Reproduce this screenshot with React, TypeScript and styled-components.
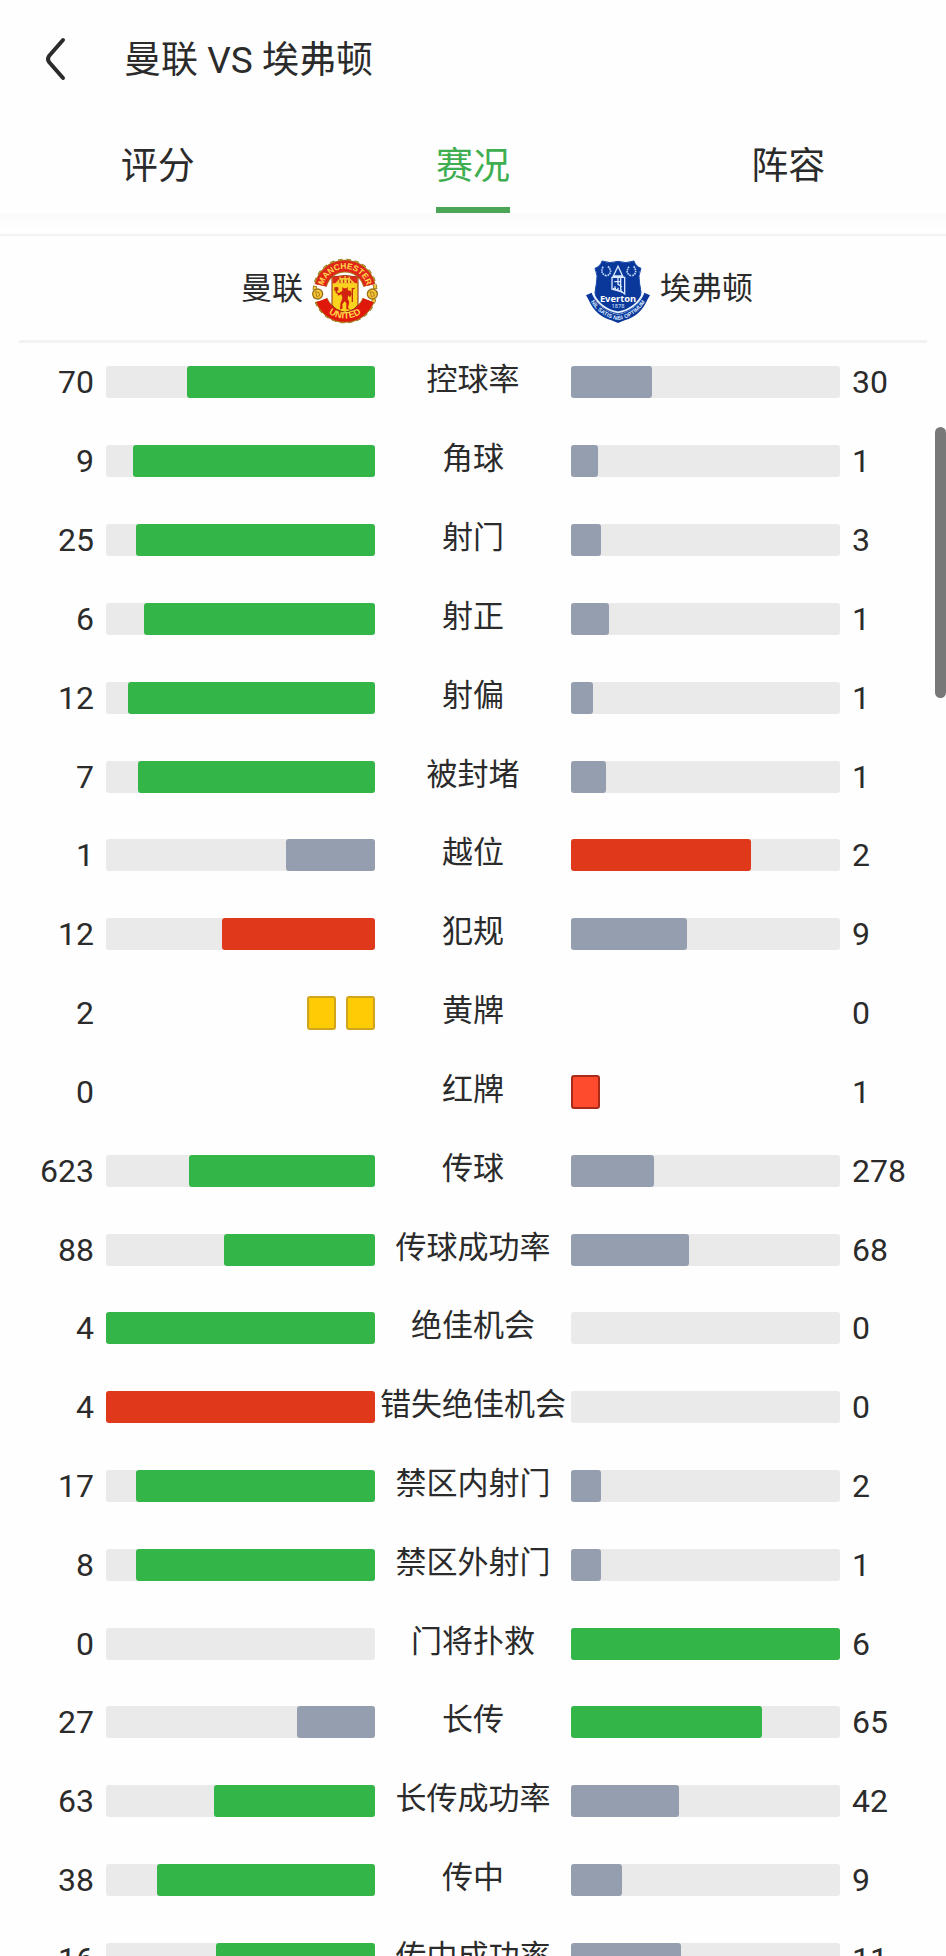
import React from 'react';
import styled, { createGlobalStyle } from 'styled-components';

const GlobalStyle = createGlobalStyle`
  * { box-sizing: border-box; }
  body {
    margin: 0;
    background: #fefefe;
    color: #2b2b2b;
    font-family: Roboto, 'Noto Sans CJK SC', sans-serif;
  }
`;

const tones = {
  lead: '#33b548',
  trail: '#949eae',
  foul: '#e0381b',
};

type Tone = keyof typeof tones;

const Screen = styled.div`
  position: relative;
  display: flex;
  flex-direction: column;
  height: 100vh;
  overflow: hidden;
`;

const TopBar = styled.header`
  display: flex;
  flex: none;
  align-items: center;
  gap: 58px;
  height: 118px;
  padding: 0 44px;
`;

const BackButton = styled.button`
  display: flex;
  padding: 0;
  border: 0;
  background: none;
  color: inherit;
  cursor: pointer;
`;

const Title = styled.h1`
  margin: 0;
  padding-top: 4px;
  font-size: 37px;
  font-weight: 400;
  line-height: 44px;
`;

const Tabs = styled.nav`
  display: grid;
  flex: none;
  grid-template-columns: repeat(3, 1fr);
  justify-items: center;
  height: 95px;
`;

const TabLink = styled.a<{ $active?: boolean }>`
  display: flex;
  align-items: center;
  padding-top: 8px;
  border-bottom: 6px solid ${(p) => (p.$active ? '#4aa557' : 'transparent')};
  color: ${(p) => (p.$active ? '#3fae50' : 'inherit')};
  font-size: 37px;
  line-height: 44px;
  text-decoration: none;
`;

const TabShade = styled.div`
  flex: none;
  height: 23px;
  border-bottom: 2px solid #f3f3f3;
  background: linear-gradient(#fafafa, #fefefe 80%);
`;

const Teams = styled.section`
  display: grid;
  flex: none;
  grid-template-columns: 1fr 1fr;
  height: 107px;
  margin: 0 19px;
  border-bottom: 3px solid #f2f2f2;
`;

const Team = styled.div<{ $side: 'home' | 'away' }>`
  display: flex;
  align-items: center;
  justify-content: ${(p) => (p.$side === 'home' ? 'flex-end' : 'flex-start')};
  gap: 9px;
  padding: ${(p) => (p.$side === 'home' ? '5px 95px 0 0' : '5px 0 0 112px')};
`;

const TeamName = styled.span`
  padding-bottom: 4px;
  font-size: 31px;
  line-height: 40px;
`;

const Scroller = styled.main`
  flex: 1;
  min-height: 0;
  overflow-y: auto;
  scrollbar-width: none;
`;

const StatTable = styled.table`
  display: block;
`;

const StatBody = styled.tbody`
  display: block;
`;

const StatRow = styled.tr`
  display: grid;
  grid-template-columns: 106px 1fr 196px 1fr 106px;
  align-items: center;
  height: calc(100vw / 12);
`;

const Value = styled.td<{ $side: 'home' | 'away' }>`
  padding: 0 12px;
  font-size: 32px;
  line-height: 40px;
  text-align: ${(p) => (p.$side === 'home' ? 'right' : 'left')};
`;

const Label = styled.th`
  padding: 0 0 4px;
  font-size: 31px;
  font-weight: 400;
  line-height: 40px;
  text-align: center;
  white-space: nowrap;
`;

const Meter = styled.td<{ $side: 'home' | 'away'; $track: boolean }>`
  display: flex;
  justify-content: ${(p) => (p.$side === 'home' ? 'flex-end' : 'flex-start')};
  gap: 10px;
  height: ${(p) => (p.$track ? '32px' : 'auto')};
  padding: 0;
  border-radius: 3px;
  background: ${(p) => (p.$track ? '#eaeaea' : 'transparent')};
`;

const Fill = styled.div<{ $tone: Tone }>`
  border-radius: 3px;
  background: ${(p) => tones[p.$tone]};
`;

const Card = styled.span<{ $color: 'yellow' | 'red' }>`
  width: 29px;
  height: 34px;
  border: 2px solid ${(p) => (p.$color === 'yellow' ? '#d0a41c' : '#a82b1a')};
  border-radius: 3px;
  background: ${(p) => (p.$color === 'yellow' ? '#ffcb05' : '#ff4b2d')};
`;

const ScrollThumb = styled.div`
  position: absolute;
  top: 427px;
  right: 0;
  width: 11px;
  height: 271px;
  border-radius: 6px;
  background: #787878;
`;

const UnitedCrest = () => (
  <svg width="66" height="66" viewBox="0 0 198 198" role="img" aria-label="曼联队徽">
    <defs>
      <path id="united-top" d="M33 88 A67 67 0 0 1 165 88" />
      <path id="united-bottom" d="M20 128 A85 85 0 0 0 178 128" />
    </defs>
    <circle cx="99" cy="99" r="91" fill="none" stroke="#8a6a1c" strokeWidth="12" strokeDasharray="13 11" />
    <circle cx="99" cy="99" r="91" fill="none" stroke="#f3c63a" strokeWidth="8" strokeDasharray="10 14" strokeDashoffset="-1" />
    <circle cx="99" cy="99" r="76" fill="#fff" />
    <path d="M26 82 A75 75 0 0 1 172 82" fill="none" stroke="#a87518" strokeWidth="38" />
    <path d="M26 82 A75 75 0 0 1 172 82" fill="none" stroke="#e0261a" strokeWidth="33" />
    <path d="M29 127 A75 75 0 0 0 169 127" fill="none" stroke="#a87518" strokeWidth="38" />
    <path d="M29 127 A75 75 0 0 0 169 127" fill="none" stroke="#e0180c" strokeWidth="33" />
    <path d="M60 57 Q99 48 138 57 V140 Q130 156 99 163 Q68 156 60 140Z" fill="#fbd21d" stroke="#8e2a12" strokeWidth="3" />
    <path d="M62 58 Q99 50 136 58 V76 H62Z" fill="#dc2a1a" />
    <path d="M73 75 L86 62 H112 L126 75Z M84 62 V56 M99 62 V53 M112 62 V56" fill="#f5c832" stroke="#f5c832" strokeWidth="4" />
    <path d="M84 75 V65 M95 75 V65 M106 75 V65 M116 75 V68" stroke="#b62516" strokeWidth="3" />
    <path
      d="M91 87 L96 91 L103 91 L108 87 L107 97 L117 99 L119 109 L114 118 L109 112 L107 122 L112 132 L108 150 L116 155 L103 154 L103 136 L98 130 L91 139 L92 151 L84 155 L85 137 L91 121 L88 109 L79 113 L73 102 L81 105 L91 98Z"
      fill="#d0220f"
    />
    <path d="M73 87 V106 M69 88 V96 H77 V88 M121 90 V132 M121 94 L128 90" fill="none" stroke="#c22a12" strokeWidth="4" />
    <circle cx="17" cy="108" r="15" fill="#f4c536" stroke="#9a721b" strokeWidth="4" />
    <circle cx="181" cy="108" r="15" fill="#f4c536" stroke="#9a721b" strokeWidth="4" />
    <path d="M11 101 L21 104 L23 113 L14 116Z M175 101 L185 104 L187 113 L178 116Z" fill="none" stroke="#b0801e" strokeWidth="3" />
    <text fill="#ffd94a" fontFamily="Liberation Sans, sans-serif" fontSize="25" fontWeight="700" textAnchor="middle">
      <textPath href="#united-top" startOffset="50%">MANCHESTER</textPath>
    </text>
    <text fill="#ffd94a" fontFamily="Liberation Sans, sans-serif" fontSize="28" fontWeight="700" textAnchor="middle">
      <textPath href="#united-bottom" startOffset="50%">UNITED</textPath>
    </text>
  </svg>
);

const EvertonCrest = () => (
  <svg width="66" height="66" viewBox="0 0 198 198" role="img" aria-label="埃弗顿队徽">
    <defs>
      <path id="everton-motto" d="M14 126 Q42 175 99 187 Q156 175 184 126" />
    </defs>
    <path
      d="M51 9 Q75 18 99 10 Q123 18 147 9 Q151 24 168 31 Q158 52 164 78 Q172 104 164 126 Q146 158 99 168 Q52 158 34 126 Q26 104 34 78 Q40 52 30 31 Q47 24 51 9Z"
      fill="#0a389a"
      stroke="#174bae"
      strokeWidth="3"
    />
    <path
      d="M3 112 L20 104 L24 114 Q48 160 99 170 Q150 160 174 114 L178 104 L195 112 L188 124 Q167 174 119 187 L99 195 L79 187 Q31 174 10 124Z"
      fill="#0a389a"
    />
    <path d="M24 106 Q46 153 99 163 Q152 153 174 106" fill="none" stroke="#e9f2ff" strokeWidth="5" />
    <path
      d="M54 26 Q46 44 58 50 Q61 53 64 53 M69 25 Q84 42 70 51 Q67 54 64 53 M132 26 Q120 44 134 51 Q137 54 140 53 M146 25 Q158 42 146 51 Q143 53 140 53"
      fill="none"
      stroke="#b9d5fa"
      strokeWidth="5"
      strokeDasharray="5 2"
    />
    <path d="M99 25 L85 54 H113Z M81 58 H119 V108 L110 101 L81 94Z" fill="#0a389a" stroke="#dbe9ff" strokeWidth="4" />
    <path d="M99 54 V77 M107 60 V95 M88 71 H106 M99 69 V79 L111 86 M84 91 L113 103 M90 94 V85 M99 97 V89 M108 101 V93" fill="none" stroke="#dbe9ff" strokeWidth="4" />
    <text x="99" y="131" fill="#fff" fontFamily="Noto Sans, sans-serif" fontSize="28" fontWeight="700" textAnchor="middle">Everton</text>
    <text x="99" y="150" fill="#d5e6ff" fontFamily="Noto Sans, sans-serif" fontSize="17" textAnchor="middle">1878</text>
    <text fill="#dcebff" fontFamily="Liberation Sans, sans-serif" fontSize="17" fontWeight="700" textAnchor="middle">
      <textPath href="#everton-motto" startOffset="50%">NIL SATIS NISI OPTIMUM</textPath>
    </text>
  </svg>
);

interface Stat {
  label: string;
  home: number;
  away: number;
  homeTone?: Tone;
  awayTone?: Tone;
  card?: 'yellow' | 'red';
}

const stats: Stat[] = [
  { label: '控球率', home: 70, away: 30 },
  { label: '角球', home: 9, away: 1 },
  { label: '射门', home: 25, away: 3 },
  { label: '射正', home: 6, away: 1 },
  { label: '射偏', home: 12, away: 1 },
  { label: '被封堵', home: 7, away: 1 },
  { label: '越位', home: 1, away: 2, homeTone: 'trail', awayTone: 'foul' },
  { label: '犯规', home: 12, away: 9, homeTone: 'foul' },
  { label: '黄牌', home: 2, away: 0, card: 'yellow' },
  { label: '红牌', home: 0, away: 1, card: 'red' },
  { label: '传球', home: 623, away: 278 },
  { label: '传球成功率', home: 88, away: 68 },
  { label: '绝佳机会', home: 4, away: 0 },
  { label: '错失绝佳机会', home: 4, away: 0, homeTone: 'foul' },
  { label: '禁区内射门', home: 17, away: 2 },
  { label: '禁区外射门', home: 8, away: 1 },
  { label: '门将扑救', home: 0, away: 6, homeTone: 'trail', awayTone: 'lead' },
  { label: '长传', home: 27, away: 65, homeTone: 'trail', awayTone: 'lead' },
  { label: '长传成功率', home: 63, away: 42 },
  { label: '传中', home: 38, away: 9 },
  { label: '传中成功率', home: 16, away: 11 },
];

const Side = ({ stat, side }: { stat: Stat; side: 'home' | 'away' }) => {
  const count = stat[side];
  const { card } = stat;
  if (card) {
    return (
      <Meter $side={side} $track={false}>
        {Array.from({ length: count }, (_, i) => (
          <Card key={i} $color={card} />
        ))}
      </Meter>
    );
  }
  const tone = side === 'home' ? stat.homeTone ?? 'lead' : stat.awayTone ?? 'trail';
  const share = Math.round((count / (stat.home + stat.away)) * 100);
  return (
    <Meter $side={side} $track>
      <Fill $tone={tone} style={{ width: `${share}%` }} />
    </Meter>
  );
};

export default function App() {
  return (
    <Screen>
      <GlobalStyle />
      <TopBar>
        <BackButton type="button" aria-label="返回">
          <svg width="22" height="44" viewBox="0 0 22 44" fill="none" stroke="currentColor" strokeWidth="4" strokeLinecap="round" strokeLinejoin="round">
            <path d="M19 3 L5 19 Q3 22 5 25 L19 41" />
          </svg>
        </BackButton>
        <Title>曼联 VS 埃弗顿</Title>
      </TopBar>
      <Tabs>
        <TabLink href="#rating">评分</TabLink>
        <TabLink href="#match" $active aria-current="page">赛况</TabLink>
        <TabLink href="#lineup">阵容</TabLink>
      </Tabs>
      <TabShade />
      <Teams>
        <Team $side="home">
          <TeamName>曼联</TeamName>
          <UnitedCrest />
        </Team>
        <Team $side="away">
          <EvertonCrest />
          <TeamName>埃弗顿</TeamName>
        </Team>
      </Teams>
      <Scroller>
        <StatTable>
          <StatBody>
            {stats.map((stat) => (
              <StatRow key={stat.label}>
                <Value $side="home">{stat.home}</Value>
                <Side stat={stat} side="home" />
                <Label scope="row">{stat.label}</Label>
                <Side stat={stat} side="away" />
                <Value $side="away">{stat.away}</Value>
              </StatRow>
            ))}
          </StatBody>
        </StatTable>
      </Scroller>
      <ScrollThumb />
    </Screen>
  );
}
